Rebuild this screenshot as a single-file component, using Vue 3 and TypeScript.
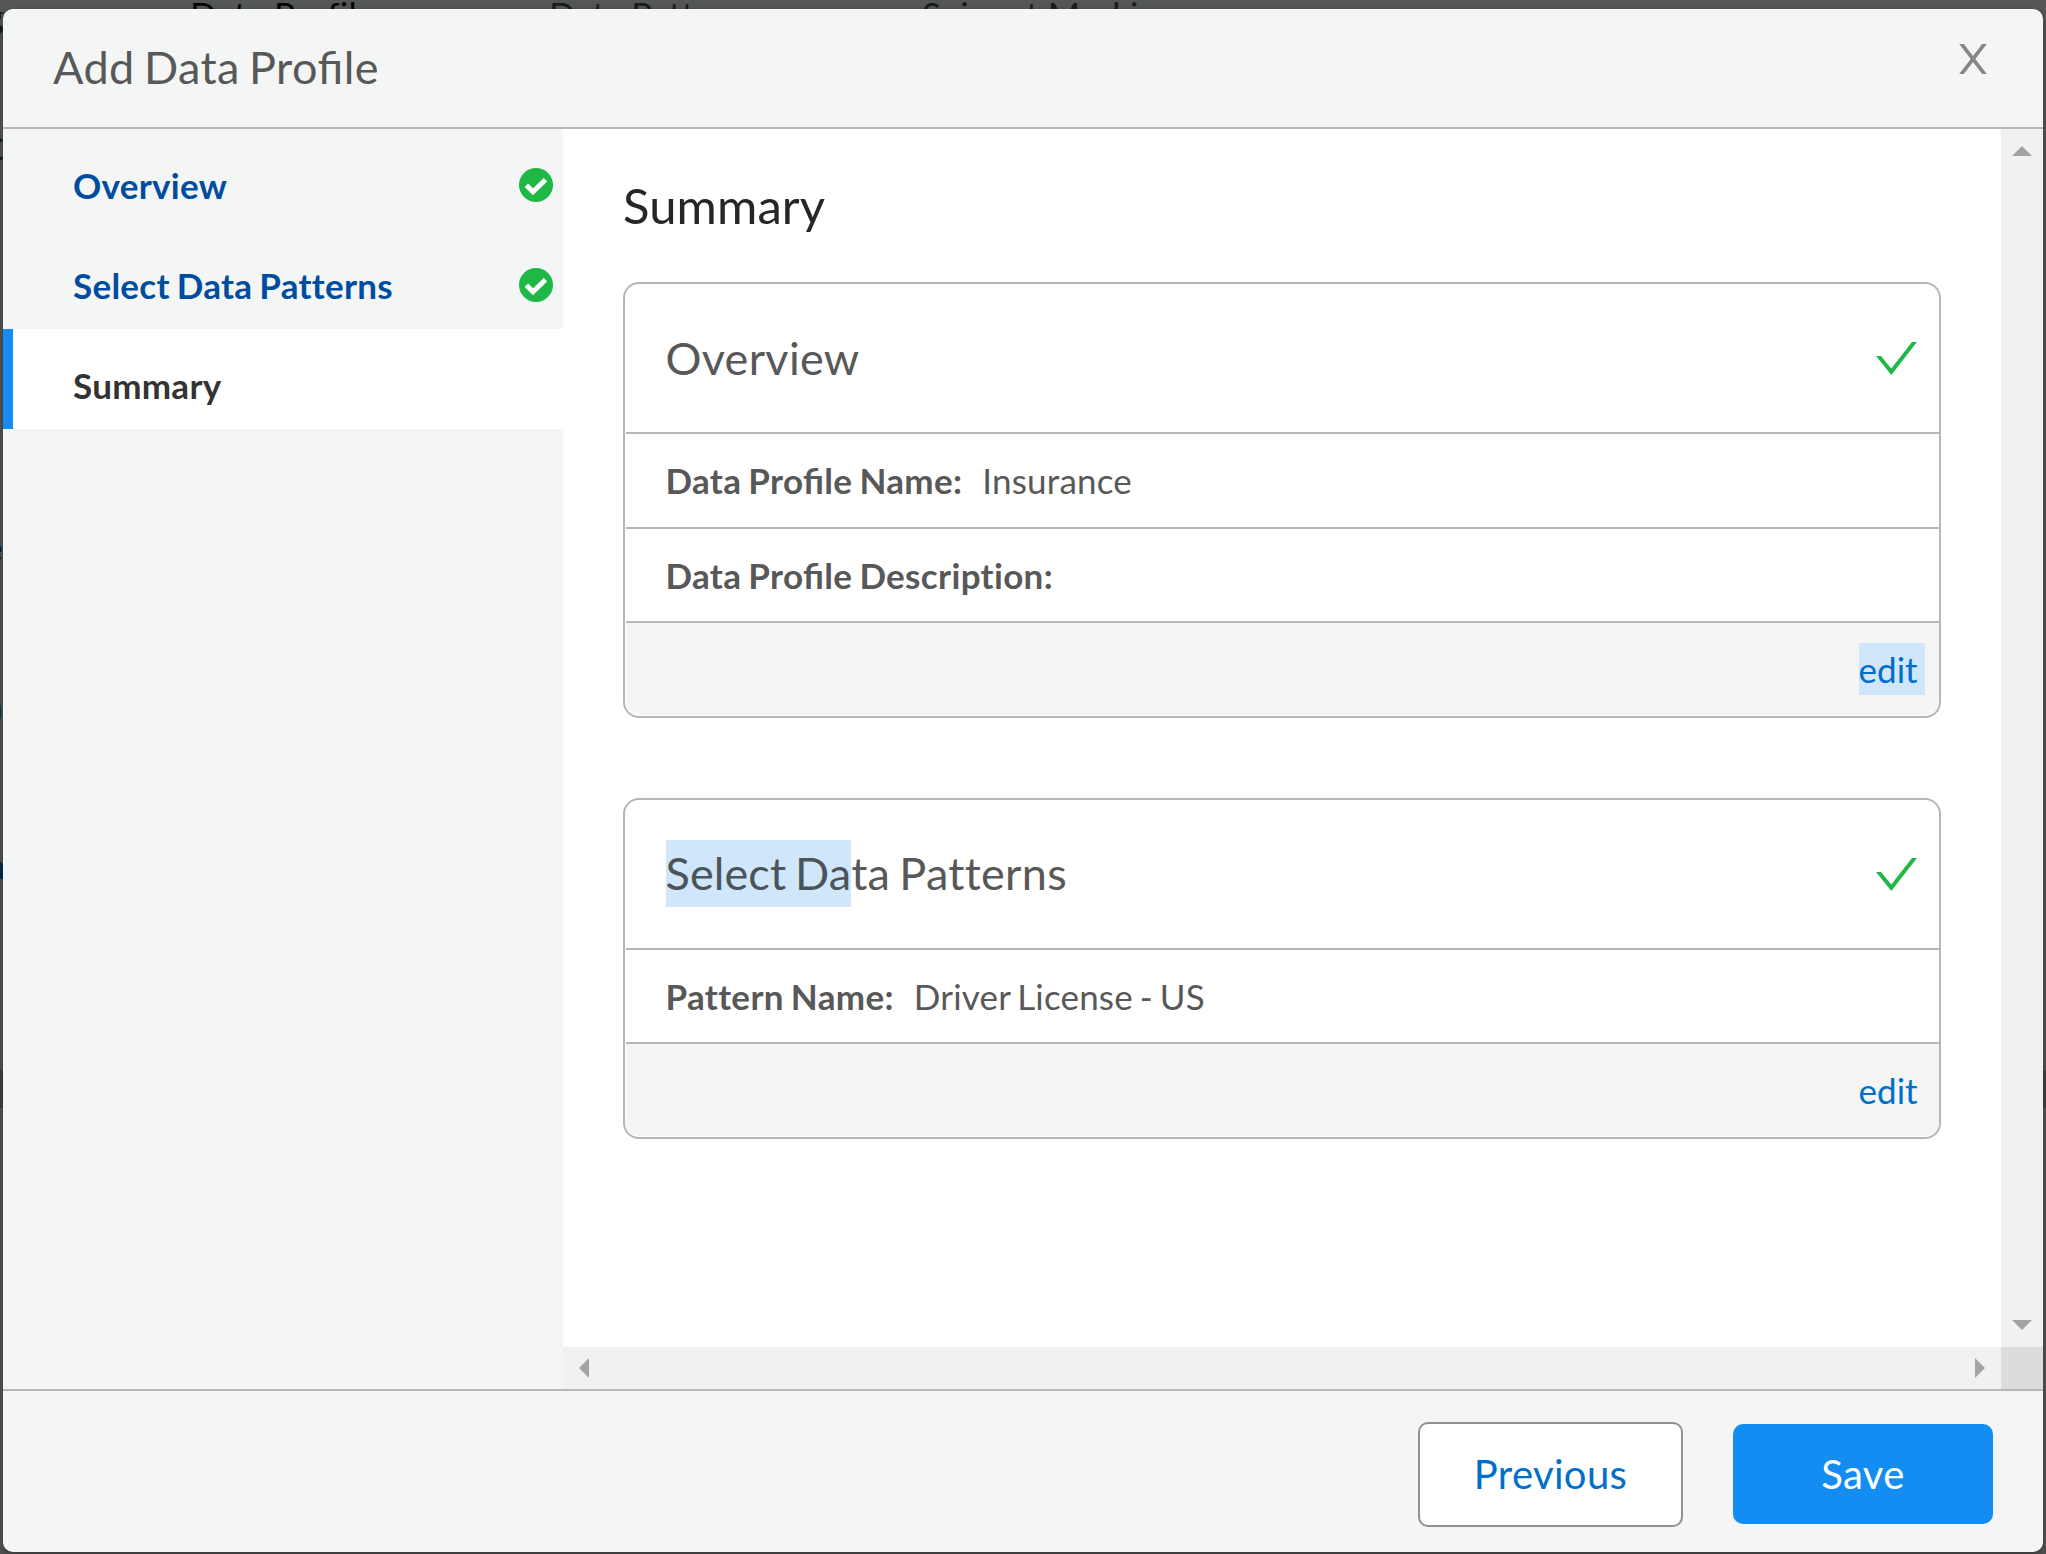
<script setup lang="ts">
interface Step { label: string; done: boolean }
interface Field { label: string; value: string }
interface Card { selected: string; title: string; fields: Field[]; editSelected: boolean }

const steps: Step[] = [
  { label: 'Overview', done: true },
  { label: 'Select Data Patterns', done: true },
  { label: 'Summary', done: false },
]

const cards: Card[] = [
  {
    selected: '',
    title: 'Overview',
    fields: [
      { label: 'Data Profile Name:', value: 'Insurance' },
      { label: 'Data Profile Description:', value: '' },
    ],
    editSelected: true,
  },
  {
    selected: 'Select Da',
    title: 'ta Patterns',
    fields: [{ label: 'Pattern Name:', value: 'Driver License - US' }],
    editSelected: false,
  },
]

// Only words with "fi" are set with ligatures; "tt" and "ti" stay apart.
const parts = (text: string): string[] => text.split(/(\S*fi\S*)/).filter(Boolean)
</script>

<template>
  <div class="page">
    <div class="backdrop" aria-hidden="true">
      <span class="behind b1">Data Profiles</span>
      <span class="behind b2">Data Patterns</span>
      <span class="behind b3">Snippet Masking</span>
      <span class="edge e0">g</span>
      <span class="edge e1">C</span>
      <span class="edge link e2">e</span>
      <span class="edge link e3">a</span>
      <span class="edge link e4">n</span>
      <span class="band"></span>
    </div>
    <section class="modal">
      <header class="head">
        <h1><span v-for="p in parts('Add Data Profile')" :key="p" :class="{ lig: p.includes('fi') }">{{ p }}</span></h1>
        <svg class="close" width="28" height="30" viewBox="0 0 28 30">
          <path d="M1 -2 L27 32 M27 -2 L1 32" fill="none" stroke="#858786" stroke-width="3.7" />
        </svg>
      </header>
      <div class="body">
        <nav class="steps">
          <div v-for="s in steps" :key="s.label" class="step" :class="{ active: !s.done }">
            <span>{{ s.label }}</span>
            <svg v-if="s.done" width="34" height="34" viewBox="0 0 34 34">
              <circle cx="17" cy="17" r="17" fill="#1fb847" />
              <path d="M7.4 17.2 L14 23.8 L26.4 11.8" fill="none" stroke="#fff" stroke-width="4.8" />
            </svg>
          </div>
        </nav>
        <div class="scroller">
          <main class="content">
            <h2>Summary</h2>
            <article v-for="c in cards" :key="c.title" class="card">
              <div class="card-head">
                <h3><mark v-if="c.selected">{{ c.selected }}</mark>{{ c.title }}</h3>
                <svg width="41" height="33" viewBox="0 0 41 33">
                  <path d="M0 14 H5 L15.3 26.5 L36 0 H41 L15.3 33 Z" fill="#1fb847" />
                </svg>
              </div>
              <div v-for="f in c.fields" :key="f.label" class="field">
                <b><span v-for="p in parts(f.label)" :key="p" :class="{ lig: p.includes('fi') }">{{ p }}</span></b>
                <span class="value">{{ f.value }}</span>
              </div>
              <div class="card-foot"><a :class="{ marked: c.editSelected }">edit</a></div>
            </article>
          </main>
          <div class="vbar">
            <svg width="20" height="10" viewBox="0 0 20 10"><path d="M0 10 L10 0 L20 10 Z" fill="#a3a3a3" /></svg>
            <svg width="20" height="10" viewBox="0 0 20 10"><path d="M0 0 L10 10 L20 0 Z" fill="#a3a3a3" /></svg>
          </div>
          <div class="hbar">
            <svg width="10" height="20" viewBox="0 0 10 20"><path d="M10 0 L0 10 L10 20 Z" fill="#a3a3a3" /></svg>
            <svg width="10" height="20" viewBox="0 0 10 20"><path d="M0 0 L10 10 L0 20 Z" fill="#a3a3a3" /></svg>
          </div>
          <div class="corner"></div>
        </div>
      </div>
      <footer class="foot">
        <button class="prev">Previous</button>
        <button class="save">Save</button>
      </footer>
    </section>
  </div>
</template>

<style>
body { overflow: hidden; }
</style>

<style scoped>
* { box-sizing: border-box; }
.page {
  position: relative;
  width: 2046px;
  height: 1554px;
  padding: 9px 3px 2px;
  overflow: hidden;
  background: #555756;
  font-family: Lato, "Open Sans", sans-serif;
  font-feature-settings: "liga" 0;
  color: #585858;
}
.lig { font-feature-settings: "liga" 1; }
.backdrop { position: absolute; inset: 0; font-size: 35px; line-height: 42px; color: #1b1c1c; }
.behind, .edge, .band { position: absolute; white-space: nowrap; }
.behind { top: -7px; }
.b1 { left: 190px; color: #050505; letter-spacing: 0.35px; }
.b2 { left: 549px; }
.b3 { left: 922px; }
.edge { right: 2043px; }
.edge.link { color: #002b4f; }
.e0 { top: -6px; right: 2042px; }
.e1 { top: 127px; right: 2042px; }
.e2 { top: 526px; }
.e3 { top: 684px; }
.e4 { top: 844px; right: 2041px; }
.band { left: 0; top: 1070px; width: 2046px; height: 38px; background: #414242; }
.modal {
  position: relative;
  display: flex;
  flex-direction: column;
  height: 100%;
  border-radius: 10px;
  overflow: hidden;
  background: #fff;
  box-shadow: 0 6px 12px rgba(0, 0, 0, 0.35);
}
h1, h2, h3 { margin: 0; font-weight: 400; }
.head {
  flex: none;
  height: 120px;
  display: flex;
  justify-content: space-between;
  padding: 25px 56px 0 50px;
  border-bottom: 2px solid #b5b8b6;
  border-radius: 13px 13px 0 0;
  background: #f4f6f5;
}
h1 { font-size: 45px; line-height: 67px; letter-spacing: 0.45px; word-spacing: -2.8px; }
.close { margin-top: 10px; }
.body { flex: none; height: 1260px; display: flex; }
.steps {
  flex: none;
  width: 560px;
  background: #f4f6f5;
  font-size: 35px;
  font-weight: 700;
  letter-spacing: 0.28px;
  word-spacing: -1.8px;
}
.step {
  height: 100px;
  display: flex;
  align-items: center;
  justify-content: space-between;
  padding: 12px 10.4px 0 70px;
  color: #004c9f;
}
.step.active {
  background: #fff;
  color: #333;
  padding-left: 60px;
  border-left: 10px solid #148df2;
}
.scroller {
  flex: 1;
  display: grid;
  grid-template-columns: 1fr 42px;
  grid-template-rows: 1218px 42px;
}
.content { background: #fff; padding: 39px 60px 0; }
h2 { height: 114px; font-size: 49px; line-height: 74px; letter-spacing: 0.1px; color: #262626; }
.card {
  margin-bottom: 80px;
  padding: 0 0 1px 1px;
  border: 2px solid #b5b7b6;
  border-radius: 16px;
}
.card-head {
  height: 150px;
  display: flex;
  align-items: center;
  justify-content: space-between;
  padding: 0 22.4px 0 39.5px;
  border-bottom: 2px solid #b5b7b6;
}
.card-head svg { margin-top: 1px; }
.card + .card .card-head { padding-bottom: 1px; }
h3 { font-size: 45px; line-height: 67px; letter-spacing: 0.3px; word-spacing: -2.8px; }
mark { display: inline-block; background: #d0e7fb; color: #4c545a; letter-spacing: 0.1px; }
.field {
  height: 94px;
  display: flex;
  align-items: center;
  gap: 20px;
  padding-left: 39.5px;
  border-bottom: 2px solid #b5b7b6;
  font-size: 35px;
}
.field:has(+ .field) { height: 95px; padding-bottom: 1px; }
.field b { letter-spacing: 0.33px; word-spacing: -1.8px; }
.value { letter-spacing: 0.18px; word-spacing: -2.3px; }
.card-foot {
  height: 92px;
  display: flex;
  align-items: center;
  justify-content: flex-end;
  padding-right: 14px;
  background: #f4f6f5;
  border-radius: 0 0 13px 13px;
  font-size: 35px;
  line-height: 52px;
}
.card-foot a { color: #006fcc; padding-right: 7.4px; }
.card-foot a.marked { background: #d0e7fb; }
.vbar, .hbar { display: flex; align-items: center; justify-content: space-between; background: #f1f1f1; }
.vbar { flex-direction: column; padding: 17px 0; }
.hbar { padding: 0 16px; }
.corner { background: #dcdcdc; }
.foot {
  flex: 1;
  display: flex;
  justify-content: flex-end;
  align-items: flex-start;
  gap: 50px;
  padding: 31px 50px 0 0;
  border-top: 2px solid #b5b8b6;
  border-radius: 0 0 13px 13px;
  background: #f4f6f5;
}
button { font: 40px/1 Lato, sans-serif; border-radius: 10px; padding: 0; letter-spacing: 0.35px; }
.prev { width: 265px; height: 105px; padding-bottom: 2px; border: 2px solid #919191; background: #fff; color: #006fcc; }
.save { width: 260px; height: 100px; margin-top: 2px; border: 0; background: #148df2; color: #fff; }
</style>
